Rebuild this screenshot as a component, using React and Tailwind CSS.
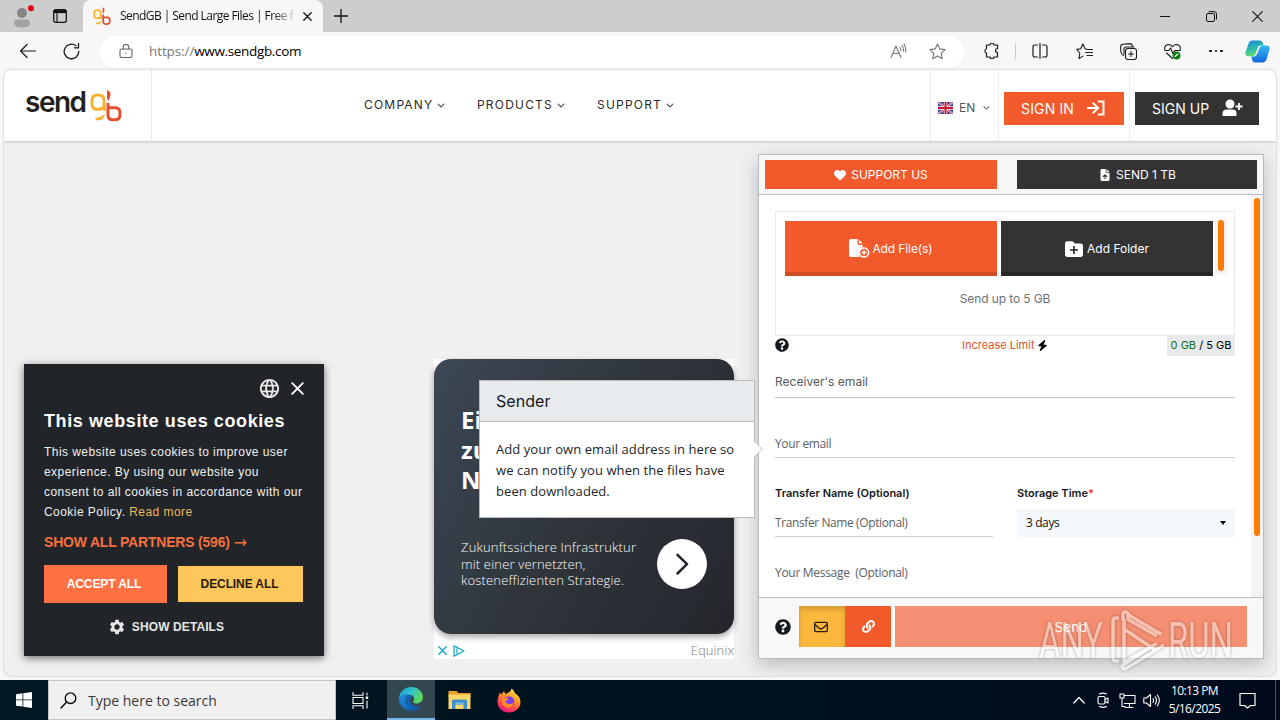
import {
  FaBolt,
  FaChevronDown,
  FaFileArrowUp,
  FaFolder,
  FaHeart,
  FaRegEnvelope,
} from 'react-icons/fa6';
import { FaLink, FaQuestionCircle } from 'react-icons/fa';
import { MdLanguage, MdSettings } from 'react-icons/md';

const segoe = "font-['Open_Sans','Noto_Sans',sans-serif]";
const inter = "font-['Inter','Liberation_Sans',sans-serif]";
const arial = "font-['Liberation_Sans',Arial,sans-serif]";

// ---------- shared drawings ----------

function Line({ children, size = 16, w = 1, className = '', box = 16 }) {
  return (
    <svg
      width={size}
      height={size}
      viewBox={`0 0 ${box} ${box}`}
      fill="none"
      stroke="currentColor"
      strokeWidth={w}
      strokeLinecap="round"
      strokeLinejoin="round"
      className={`shrink-0 ${className}`}
    >
      {children}
    </svg>
  );
}

function GbMark({ width, height }) {
  return (
    <svg width={width} height={height} viewBox="0 0 32 32" fill="none" className="shrink-0">
      <path d="M16 20.200Q13.500 20 12.600 18.600Q10.500 20 7.500 20Q2 20 2 14.500V11Q2 5.500 7.500 5.500h1Q14 5.500 14 11v5q0 2 1.200 2.800" stroke="#fbb034" strokeWidth="3" />
      <path d="M5 28.200Q10 28.300 14.700 24.500Q14.500 30.800 7.500 31Q5 30.500 5 28.200Z" fill="#fbb034" />
      <path d="M17 .5Q21 1.800 20.600 5.500L18.600 11.500L17 9Z" fill="#e2502f" />
      <path d="M18 13.500v12q0 4.800 4.800 4.800h2.300q4.800 0 4.800-4.800v-2.500q0-4.700-4.800-4.700H18" stroke="#e2502f" strokeWidth="3" />
    </svg>
  );
}

function EdgeIcon() {
  return (
    <svg width="26" height="26" viewBox="0 0 26 26">
      <defs>
        <linearGradient id="edgeTop" x1="0" y1="0" x2="1" y2="0.4">
          <stop offset="0" stopColor="#2197d8" />
          <stop offset="0.5" stopColor="#2fc3d4" />
          <stop offset="1" stopColor="#5ad75a" />
        </linearGradient>
        <linearGradient id="edgeLow" x1="0" y1="0" x2="1" y2="1">
          <stop offset="0" stopColor="#1f8fe0" />
          <stop offset="1" stopColor="#0c4f9e" />
        </linearGradient>
      </defs>
      <path d="M1 12C2 5 7 1 13 1c7 0 12 5 12 10 0 4-3 6.500-6.500 6.500-3 0-4-1.500-3-2.800 1.500-2 .5-6-4.500-6C6 8.700 2 11 1 12Z" fill="url(#edgeTop)" />
      <path d="M1 12c2-3 6-4.300 10-3.300C8 10 7 13 8 16.500 9.500 21 14 23.500 22.500 20 20 24 16.500 25.300 12.500 25 6 24.500 .6 19 1 12Z" fill="url(#edgeLow)" />
      <path d="M11 8.700c-2.500 1.800-3.500 5-2.500 8.300 1.500 4.500 7 6.500 14 3-3.500 1-9 .2-10.300-4-.6-2-.1-4 1.500-5.500C13 9.300 12 8.800 11 8.700Z" fill="#1164b8" />
    </svg>
  );
}

function ExplorerIcon() {
  return (
    <svg width="23" height="20" viewBox="0 0 23 20">
      <path d="M.5 1h8l2 2h12v4H.5Z" fill="#eaa12a" />
      <path d="M.5 4.500h22V19H.5Z" fill="#fdd766" />
      <path d="M4 19v-8q0-1.500 1.500-1.500h12Q19 9.500 19 11v8h-3.500v-4.500h-8V19Z" fill="#3f8fce" />
      <path d="M7.500 12.500h8v2h-8Z" fill="#7fbde8" />
    </svg>
  );
}

function FirefoxIcon() {
  return (
    <svg width="24" height="25" viewBox="0 0 24 25">
      <defs>
        <linearGradient id="fox" x1="0.8" y1="0" x2="0.3" y2="1">
          <stop offset="0" stopColor="#fff04a" />
          <stop offset="0.4" stopColor="#ff9a26" />
          <stop offset="0.75" stopColor="#ff4056" />
          <stop offset="1" stopColor="#e31587" />
        </linearGradient>
      </defs>
      <path d="M14.500.5c2 1.500 3 3 3.400 4.700C21 7 23.500 10 23.500 14c0 6-5 10.500-11.500 10.500S.5 20 .5 13.500C.5 10 2 7 3 4.500l1.500 2L7 3l1.500 3.200C11 5 14 4 14.500.5Z" fill="url(#fox)" />
      <circle cx="12" cy="13.500" r="5.300" fill="#7a3ff0" />
      <path d="M5 11c2-2 5-1.500 7-.2-1 1.500-2.500 1.400-3.500 2.400 1 3.300 5.500 3.800 8 1.300C16 19 12 20.500 9 19.500 5.500 18.300 4 14.500 5 11Z" fill="#ff8a2a" />
    </svg>
  );
}

function CopilotIcon() {
  return (
    <svg width="25" height="23" viewBox="0 0 25 23">
      <defs>
        <linearGradient id="copA" x1="0" y1="0" x2="0.3" y2="1">
          <stop offset="0" stopColor="#1b7fe0" />
          <stop offset="0.6" stopColor="#2bc0a8" />
          <stop offset="1" stopColor="#6fdc6a" />
        </linearGradient>
        <linearGradient id="copB" x1="0.5" y1="0" x2="0.5" y2="1">
          <stop offset="0" stopColor="#35b8f2" />
          <stop offset="1" stopColor="#1668dd" />
        </linearGradient>
      </defs>
      <path d="M7.500.5h7.500q2 0 2.800 2.500l.7 2.500h-3q-2 0-2.700 2L10.500 14q-.8 2.300-3 2.300H3.300Q-.5 16.300.7 12L3.500 3.500Q4.500.5 7.500.5Z" fill="url(#copA)" />
      <path d="M17.500 22.500H10q-2 0-2.800-2.500l-.9-3.500h2.700q2 0 2.800-2L14.500 8q.8-2.500 3-2.500h4.200q3.800 0 2.600 4.500l-2.800 9.500q-1 3-4 3Z" fill="url(#copB)" />
    </svg>
  );
}

function UkFlag() {
  return (
    <svg width="15" height="12" viewBox="0 0 15 12" className="shrink-0">
      <rect width="15" height="12" rx="1" fill="#37408f" />
      <path d="M0 0l15 12M15 0L0 12" stroke="#e9e4ee" strokeWidth="2" />
      <path d="M0 0l15 12M15 0L0 12" stroke="#cf2740" strokeWidth="0.900" />
      <path d="M7.500 0v12M0 6h15" stroke="#f3eef2" strokeWidth="3.400" />
      <path d="M7.500 0v12M0 6h15" stroke="#cf1430" strokeWidth="2" />
    </svg>
  );
}

// ---------- browser chrome ----------

function TabStrip() {
  return (
    <div className="flex h-8 shrink-0 bg-[#cdcdcd] text-[#111]">
      <div className="flex w-[83px] items-center rounded-br-md pl-[13px]">
        <svg width="22" height="24" viewBox="0 0 22 24" className="shrink-0">
          <circle cx="9" cy="9" r="5" fill="#858585" />
          <path d="M1 19q0-3.500 3.500-3.500h9q3.500 0 3.500 3.500 0 4.500-8 4.500t-8-4.500Z" fill="#a5a1a0" />
          <circle cx="18" cy="4.200" r="3" fill="#e3000f" />
        </svg>
        <svg width="14" height="14" viewBox="0 0 14 14" className="ml-[18px] shrink-0" fill="none" stroke="#111">
          <rect x="0.700" y="0.700" width="12.600" height="12.600" rx="2" strokeWidth="1.300" />
          <path d="M1 2.600h12" strokeWidth="3" />
          <path d="M4 3v10" strokeWidth="1.100" />
        </svg>
      </div>
      <div className="flex w-[240px] items-center rounded-t-lg bg-[#f7f7f7] pl-[10px]">
        <GbMark width={18} height={18} />
        <span className={`ml-[9px] w-[174px] overflow-hidden bg-gradient-to-r from-[#111] from-88% to-[#11111120] bg-clip-text text-[12px] leading-5 tracking-[-0.56px] whitespace-nowrap text-transparent ${segoe}`}>
          SendGB | Send Large Files | Free f
        </span>
        <Line size={9} box={9} w={1.3} className="ml-[9px]">
          <path d="M.8.8l7.400 7.400M8.200.8L.8 8.200" />
        </Line>
      </div>
      <div className="flex flex-1 items-center rounded-bl-md pl-[11px]">
        <Line size={14} box={14} w={1.3}>
          <path d="M7 .5v13M.5 7h13" />
        </Line>
      </div>
      <div className="flex items-center pr-[17px]">
        <Line size={10} box={10} w={1}>
          <path d="M0 5.500h10" />
        </Line>
        <Line size={11} box={11} w={1} className="ml-[36px]">
          <rect x=".5" y="2.500" width="8" height="8" rx="1.500" />
          <path d="M3 .6h5q2.500 0 2.500 2.500v5" />
        </Line>
        <Line size={11} box={11} w={1.1} className="ml-[35px]">
          <path d="M.7.7l9.600 9.600M10.300.7L.7 10.300" />
        </Line>
      </div>
    </div>
  );
}

function Toolbar() {
  return (
    <div className="flex h-[38px] shrink-0 items-center bg-[#f7f7f7] text-[#1b1b1b]">
      <Line size={16} className="ml-5" w={1.2}>
        <path d="M.6 8h15M7 1.500L.6 8 7 14.500" />
      </Line>
      <Line size={17} box={17} className="ml-[27px]" w={1.3}>
        <path d="M15.800 8.500A7.300 7.300 0 1 1 13 2.700M15.500.6v4.200h-4.200" />
      </Line>
      <div className="ml-[20px] flex h-[31px] w-[864px] items-center rounded-full bg-white pl-[19px]">
        <Line size={14} box={14} className="text-[#666]" w={1.1}>
          <rect x="1" y="5" width="12" height="8.500" rx="1.500" />
          <path d="M4.200 5V3.200a2.800 2.800 0 0 1 5.600 0V5M7 9v.4" />
        </Line>
        <span className={`ml-[16px] text-[13.5px] leading-5 tracking-[-0.35px] whitespace-nowrap ${segoe}`}>
          <span className="tracking-[-0.1px] text-[#777]">https://</span>
          <span className="text-black">www.sendgb.com</span>
        </span>
        <div className="ml-auto flex items-center gap-[22px] pr-[18px] text-[#777]">
          <Line size={17} box={17} w={1.1}>
            <path d="M1 14.500L6 3l5 11.500M2.800 10.500h6.500M10 4.500q1 1.300.6 3M12 2.500q2 2.500 1.200 6M14 .9q2.500 4 1.500 8" />
          </Line>
          <Line size={17} box={17} w={1.1}>
            <path d="M8.500 1l2.300 4.900 5.300.7-3.900 3.700 1 5.400-4.700-2.600-4.700 2.600 1-5.400L.9 6.600l5.300-.7Z" />
          </Line>
        </div>
      </div>
      <Line size={16} className="ml-[20px]" w={1.2}>
        <path d="M2.500 2h3.300a2.200 2.200 0 0 1 4.300 0h3.400v3.500a2 2 0 0 0 0 4v4.500h-3.400a2.200 2.200 0 0 1-4.300 0H2.500v-4a2.200 2.200 0 0 1 0-4.200Z" />
      </Line>
      <div className="ml-[15px] h-4 w-px bg-[#ccc]" />
      <Line size={16} className="ml-4" w={1.2}>
        <path d="M5.500 2H3Q1 2 1 4v8q0 2 2 2h2.500M8 .5v15M10.500 2H13q2 0 2 2v8q0 2-2 2h-2.500" />
      </Line>
      <Line size={17} box={17} className="ml-[28px]" w={1.1}>
        <path d="M10.500 6L9 5.700 6.800 1 4.700 5.700.8 6.400l3 3.600-.8 5.500 4-2.400M11 6.500h5.500M9.500 9.500h7M11 12.500h5.500" />
      </Line>
      <Line size={17} box={17} className="ml-[27px]" w={1.1}>
        <rect x="5.500" y="5.500" width="11" height="11" rx="2.500" />
        <path d="M11 8.500v5M8.500 11h5M3.500 12.500Q1 11 .8 8.500L.6 4Q.6 1.500 3 1.200L9.500.6Q12 .6 12.500 3M4 11V6q0-2 2-2h8" />
      </Line>
      <Line size={17} box={17} className="ml-[27px]" w={1.1}>
        <path d="M.8 7Q0 2 4.300 1.500 7 1.500 8.500 3.700 10 1.500 12.700 1.500 17 2 16.200 7M.8 7.500h4L6.500 5l2.500 5.500 1.700-3h5.500M2.500 10l6 5.500" />
        <circle cx="12.500" cy="12.500" r="4" fill="#107c10" stroke="none" />
        <path d="M11 13.500l3-2.500" stroke="#fff" />
      </Line>
      <span className="ml-[28px] flex gap-[3px]">
        <i className="size-[2.5px] rounded-full bg-black" />
        <i className="size-[2.5px] rounded-full bg-black" />
        <i className="size-[2.5px] rounded-full bg-black" />
      </span>
      <span className="ml-[22px]">
        <CopilotIcon />
      </span>
    </div>
  );
}

// ---------- site header ----------

const menu = [
  { label: 'COMPANY', w: 'w-[113px]' },
  { label: 'PRODUCTS', w: 'w-[120px]' },
  { label: 'SUPPORT', w: 'w-[100px]' },
];

function SiteHeader() {
  return (
    <header className={`relative flex h-[71px] shrink-0 bg-white shadow-[0_1px_3px_rgba(0,0,0,0.18)] ${inter}`}>
      <div className="flex w-[148px] border-r border-[#e8e8e8] pt-[19px] pl-[21px]">
        <span className="mt-[-3px] w-[65px] font-['Inter',sans-serif] text-[28px] leading-[32px] font-semibold tracking-[-1.5px] text-[#231f20]">
          send
        </span>
        <GbMark width={32} height={33} />
      </div>
      <nav className="flex flex-1 pt-[25px] pl-[212px]">
        {menu.map((m) => (
          <span key={m.label} className={`flex h-5 items-center text-[12px] tracking-[1.2px] text-[#2b2b2b] ${m.w}`}>
            {m.label}
            <FaChevronDown size={8} className="ml-[4px]" />
          </span>
        ))}
      </nav>
      <div className="flex w-[69px] items-center border-x border-[#ececec] pt-[4px] pl-[7px] text-[12px] text-[#555]">
        <UkFlag />
        <span className="ml-[6px]">EN</span>
        <FaChevronDown size={7} className="ml-[8px]" />
      </div>
      <div className="flex w-[131px] items-center border-r border-[#ececec] pt-[6px] pl-[5px]">
        <button type="button" className="flex h-[33px] w-[120px] items-center bg-[#f25a2c] pl-[17px] text-[14px] tracking-[0.15px] text-white">
          SIGN IN
          <Line size={18} box={18} w={2} className="mt-[-2px] ml-[13px]">
            <path d="M1 9h9.500M6.500 4.500L11 9l-4.500 4.500M12 2.500h4.500v13H12" strokeLinecap="square" strokeLinejoin="miter" />
          </Line>
        </button>
      </div>
      <div className="flex w-[146px] items-center pt-[6px] pl-[5px]">
        <button type="button" className="flex h-[33px] w-[124px] items-center bg-[#333] pl-[17px] text-[14px] tracking-[0.02px] text-white">
          SIGN UP
          <svg width="21" height="18" viewBox="0 0 21 18" fill="#fff" className="mt-[-2px] ml-[13px] shrink-0">
            <circle cx="8" cy="5" r="4.500" />
            <path d="M.5 17v-2.500Q.5 10.500 5 10.500h5.500q4 0 4 4V17Z" />
            <path d="M17 4v7M13.500 7.500h7" stroke="#fff" strokeWidth="1.800" />
          </svg>
        </button>
      </div>
    </header>
  );
}

// ---------- page content ----------

function CookieDialog() {
  return (
    <div className={`mb-[20px] ml-5 h-[292px] w-[300px] shrink-0 self-end bg-[#212428] px-5 text-white shadow-[0_2px_8px_rgba(0,0,0,0.55)] ${arial}`}>
      <div className="flex h-[45px] items-center justify-end pt-[4px]">
        <MdLanguage size={23} className="text-[#e6e6e6]" />
        <Line size={13} box={13} w={1.9} className="ml-[10px]">
          <path d="M1.200 1.200l10.600 10.600M11.800 1.200L1.200 11.800" />
        </Line>
      </div>
      <h2 className="h-[33px] text-[18px] leading-6 font-bold tracking-[0.6px] whitespace-nowrap">This website uses cookies</h2>
      <p className="text-[12px] leading-5 tracking-[0.45px] whitespace-nowrap text-[#f0f0f0]">
        This website uses cookies to improve user
        <br />
        experience. By using our website you
        <br />
        consent to all cookies in accordance with our
        <br />
        Cookie Policy. <span className="text-[#e9b95a]">Read more</span>
      </p>
      <div className="mt-[10px] flex items-center text-[14px] leading-[21px] font-bold tracking-[-0.2px] whitespace-nowrap text-[#f5703f]">
        SHOW ALL PARTNERS (596)
        <span className="ml-[4px] font-['DejaVu_Sans',sans-serif] text-[16px] font-normal">→</span>
      </div>
      <div className="mt-[12px] flex h-[38px] items-center gap-[11px] text-[12px] font-bold">
        <button type="button" className="h-[38px] w-[123px] bg-[#ff7043] pr-[3px] tracking-[-0.1px]">ACCEPT ALL</button>
        <button type="button" className="h-[36px] w-[125px] bg-[#fdc75c] pr-[2px] tracking-[-0.1px] text-[#2a1c08]">DECLINE ALL</button>
      </div>
      <div className="mt-[14px] flex h-5 items-center justify-center pr-[16px] text-[12px] font-bold tracking-[0.1px] text-[#e6e6e6]">
        <MdSettings size={18} className="mr-[6px]" />
        SHOW DETAILS
      </div>
    </div>
  );
}

function AdCard() {
  return (
    <div className={`mb-[17px] ml-[110px] flex h-[300px] w-[300px] shrink-0 flex-col self-end bg-white ${segoe}`}>
      <div className="h-[275px] shrink-0 rounded-[17px] bg-[linear-gradient(120deg,#3c4855_0%,#2f353b_50%,#24262c_100%)] pt-[46px] pl-[27px] text-white shadow-[0_3px_6px_rgba(0,0,0,0.35)]">
        <h3 className="h-[134px] w-[120px] text-[24px] leading-[30px] font-bold">
          Ei
          <br />
          zu
          <br />
          N
        </h3>
        <div className="flex">
          <p className="w-[196px] text-[13px] leading-[16.5px] font-light tracking-[0.18px] whitespace-nowrap">
            Zukunftssichere Infrastruktur
            <br />
            mit einer vernetzten,
            <br />
            kosteneffizienten Strategie.
          </p>
          <span className="flex size-[50px] items-center justify-center rounded-full bg-white text-[#22262b]">
            <Line size={22} box={22} w={2.5}>
              <path d="M6.500 1.800L16 11.200 6.500 20.500" />
            </Line>
          </span>
        </div>
      </div>
      <div className="flex h-[25px] items-center pt-[8px] pl-[4px]">
        <Line size={9} box={9} w={1.4} className="text-[#17a9c4]">
          <path d="M.8.8l7.400 7.400M8.200.8L.8 8.200" />
        </Line>
        <Line size={12} box={12} w={1.3} className="ml-[6px] text-[#17a9c4]">
          <path d="M1 .8L11 6 1 11.200Z" />
          <path d="M4 4v4" />
        </Line>
        <span className="mt-[-2px] ml-auto text-[13px] leading-4 font-light tracking-[0.1px] text-[#777]">Equinix</span>
      </div>
    </div>
  );
}

function TransferPanel() {
  return (
    <section className={`mt-[13px] ml-[24px] flex h-[505px] w-[506px] shrink-0 flex-col border border-[#b9bbbc] bg-white shadow-[0_6px_18px_rgba(0,0,0,0.22)] ${inter}`}>
      <div className="flex h-[40px] shrink-0 border-b border-[#b9bbbc] bg-[#f7f7f7] pt-[5px] pl-[6px] text-[12px] text-white">
        <div className="flex h-[29px] w-[232px] items-center justify-center gap-[5px] bg-[#f25a2c]">
          <FaHeart size={12} />
          SUPPORT US
        </div>
        <div className="ml-[20px] flex h-[29px] w-[240px] items-center justify-center gap-[5px] bg-[#333] pl-px">
          <FaFileArrowUp size={12} />
          SEND 1 TB
        </div>
      </div>

      <div className="flex h-[402px] shrink-0">
        <div className="w-[492px] pt-[16px] pl-[16px]">
          <div className="h-[125px] w-[460px] border border-[#e9eaeb] pt-[9px] pl-[9px]">
            <div className="flex text-[12px] text-white">
              <div className="flex h-[55px] w-[212px] items-center justify-center border-b-[4px] border-[#cf4c24] bg-[#f25a2c] pt-[4px]">
                <svg width="21" height="19" viewBox="0 0 21 19" className="mr-[2px] shrink-0">
                  <path d="M2 0h6.500v4.500q0 1.500 1.500 1.500h3.500v4q-3.500 1.500-3.500 5 0 2 1 3H2q-2 0-2-2V2q0-2 2-2ZM9.800.3l3.700 4.200H9.800Z" fill="#fff" />
                  <circle cx="15" cy="13.500" r="4.600" fill="none" stroke="#fff" strokeWidth="1.500" />
                  <path d="M15 11v5M12.500 13.500h5" stroke="#fff" strokeWidth="1.300" />
                </svg>
                <span className="tracking-[-0.1px]">Add File(s)</span>
              </div>
              <div className="ml-[4px] flex h-[55px] w-[212px] items-center justify-center border-b-[4px] border-[#282828] bg-[#333] pt-[4px]">
                <span className="relative mr-[4px] flex size-[18px] items-center">
                  <FaFolder size={18} />
                  <svg width="8" height="8" viewBox="0 0 8 8" className="absolute top-[6px] left-[5px]">
                    <path d="M4 0v8M0 4h8" stroke="#222" strokeWidth="1.600" />
                  </svg>
                </span>
                Add Folder
              </div>
              <div className="mt-[-2px] ml-[2px] flex h-[56px] w-[12px] bg-[#f4f4f4] pt-px pl-[3px]">
                <div className="h-[51px] w-[6px] rounded-full bg-[#fb7c00]" />
              </div>
            </div>
            <div className="mt-[13px] w-[440px] text-center text-[12px] leading-5 tracking-[-0.1px] text-[#6d7176]">Send up to 5 GB</div>
          </div>

          <div className="flex h-[20px] w-[460px] items-center text-[11px]">
            <FaQuestionCircle size={14} className="mt-[-2px] text-[#16191c]" />
            <span className="mt-[-2px] ml-[173px] flex items-center gap-[2px] text-[#d8532c]">
              Increase Limit
              <FaBolt size={11} className="text-black" />
            </span>
            <span className="ml-auto flex h-5 w-[68px] items-center justify-center bg-[#e7e9eb] pb-[2px] text-black">
              <span className="text-[#107010]">0 GB</span>&nbsp;/ 5 GB
            </span>
          </div>

          <div className="flex h-[42px] w-[460px] items-end border-b border-[#c2c2c2] pb-[5px] text-[12px] leading-5 tracking-[0.02px] text-[#55585c]">
            Receiver's email
          </div>
          <div className={`flex h-[60px] w-[460px] items-end border-b border-[#cfcfcf] pb-[3px] text-[12px] leading-5 tracking-[-0.38px] text-[#5c6064] ${segoe}`}>
            Your email
          </div>

          <div className="mt-[25px] flex text-[11px] leading-5 font-semibold text-[#16191c]">
            <span className="w-[242px]">Transfer Name (Optional)</span>
            <span>
              Storage Time<span className="text-[#dc3545]">*</span>
            </span>
          </div>
          <div className={`mt-[6px] flex text-[12px] leading-5 tracking-[-0.4px] ${segoe}`}>
            <div className="h-[28px] w-[218px] border-b border-[#cfcfcf] pt-[4px] text-[#5c6064]">Transfer Name (Optional)</div>
            <div className="ml-[24px] flex h-[28px] w-[218px] items-center bg-[#f5f8fa] pr-[9px] pl-[9px] text-[#111]">
              3 days
              <span className="ml-auto border-x-[3.5px] border-t-[4px] border-x-transparent border-t-black" />
            </div>
          </div>
          <div className={`mt-[26px] text-[12px] leading-5 tracking-[-0.3px] whitespace-pre text-[#5c6064] ${segoe}`}>{'Your Message  (Optional)'}</div>
        </div>
        <div className="flex w-[12px] justify-center bg-[#f3f3f3] pt-[3px]">
          <div className="h-[338px] w-[6px] rounded-full bg-[#fb7c00]" />
        </div>
      </div>

      <div className="flex flex-1 border-t border-[#b9bbbc] bg-[#f8f8f8] pt-[8px] pl-[16px]">
        <FaQuestionCircle size={16} className="mt-[13px] text-[#16191c]" />
        <div className="ml-[8px] flex h-[41px] w-[46px] items-center justify-center bg-[#fbb83d] pr-[2px] text-[#2b1c05] shadow-[inset_0_3px_5px_rgba(0,0,0,0.18)]">
          <FaRegEnvelope size={14} />
        </div>
        <div className="flex h-[41px] w-[46px] items-center justify-center bg-[#f25a2c] text-white">
          <FaLink size={13} />
        </div>
        <div className="ml-[4px] flex h-[41px] w-[352px] items-center justify-center bg-[#f58f72] pt-[2px] text-[13.5px] text-white">Send</div>
      </div>
    </section>
  );
}

function SenderPopover() {
  return (
    <div className={`absolute top-[310px] left-[475px] h-[138px] w-[276px] border border-[#b9bbbc] bg-white ${inter}`}>
      <div className="h-[41px] border-b border-[#b9bbbc] bg-[#e8ebee] pl-[16px] text-[16px] leading-[40px] tracking-[0.05px] text-[#16191c]">
        Sender
      </div>
      <p className={`pt-[17px] pl-[16px] text-[13px] leading-[21px] tracking-[0.07px] whitespace-nowrap text-[#212529] ${segoe}`}>
        Add your own email address in here so
        <br />
        we can notify you when the files have
        <br />
        been downloaded.
      </p>
      <svg width="10" height="18" viewBox="0 0 10 18" className="absolute top-[59px] left-[273px]">
        <path d="M0 0L8.500 9 0 18Z" fill="#fff" />
        <path d="M1 .5L9 9 1 17.500" fill="none" stroke="#c4c6c8" />
      </svg>
    </div>
  );
}

function Watermark() {
  return (
    <svg width="210" height="70" viewBox="0 0 210 70" className="pointer-events-none absolute top-[605px] left-[1030px] overflow-visible opacity-45 drop-shadow-[0_0_1.5px_rgba(0,0,0,0.7)]">
      <g fill="#fff" fontFamily="Roboto, 'Liberation Sans', sans-serif" fontSize="50" fontWeight="400">
        <text x="9" y="53" textLength="64" lengthAdjust="spacingAndGlyphs">ANY</text>
        <text x="138" y="53" textLength="65" lengthAdjust="spacingAndGlyphs">RUN</text>
      </g>
      <g fill="none" stroke="#fff" strokeWidth="3.500" strokeLinejoin="round">
        <path d="M89 13h-3.500q-2.500 0-2.500 3v37q0 3 3 3h3" />
        <path d="M127 38.500L94 57V13.500M94 24l32 21.500M127 31L98 14.200V8.500Q94 5 93 9v6" />
        <path d="M97 9l34.500 20.500M134 40L96 63.500Q92 65 92 61l28-18.500" />
      </g>
    </svg>
  );
}

// ---------- taskbar ----------

function Taskbar() {
  return (
    <div className={`mt-auto flex h-10 shrink-0 items-center bg-[linear-gradient(90deg,#001821_0%,#00141f_40%,#000f20_75%,#000a1c_100%)] text-white ${segoe}`}>
      <div className="flex w-12 justify-center">
        <svg width="16" height="16" viewBox="0 0 16 16" fill="#fff">
          <path d="M0 2.200L6.500 1.300v6.200H0ZM7.300 1.200L16 0v7.500H7.300ZM0 8.300h6.500v6.300L0 13.800ZM7.300 8.300H16V16l-8.700-1.200Z" />
        </svg>
      </div>
      <div className="flex h-10 w-[288px] items-center border border-[#c3c3c3] bg-[#f0f0f0] pl-[11px] text-[#3a3a3a]">
        <Line size={17} box={17} w={1.3} className="text-black">
          <circle cx="10.500" cy="6.200" r="5.300" />
          <path d="M6.700 10L1 16" />
        </Line>
        <span className="mt-px ml-[11px] text-[14px] leading-5">Type here to search</span>
      </div>
      <div className="flex w-[51px] justify-center pr-[2px]">
        <Line size={17} box={17} w={1.1}>
          <path d="M1 .6v2.600h10V.6M1 16.400v-2.600h10v2.600M1 5.500h10v6H1ZM15 1v2M15 9v7" />
          <path d="M13.800 4.500h2.400v2.500h-2.400Z" fill="#fff" stroke="none" />
        </Line>
      </div>
      <div className="flex h-10 w-12 items-center justify-center border-b-2 border-[#76b9ed] bg-[#334750]">
        <EdgeIcon />
      </div>
      <div className="flex w-[49px] justify-center">
        <ExplorerIcon />
      </div>
      <div className="flex w-[49px] justify-center">
        <FirefoxIcon />
      </div>
      <div className="ml-auto flex items-center">
        <Line size={12} box={12} w={1.2}>
          <path d="M.8 9L6 3.500 11.200 9" />
        </Line>
        <Line size={16} box={16} w={1.1} className="ml-[10px]">
          <rect x="3" y="4.500" width="7" height="7.500" rx="1.500" />
          <path d="M10 7.500l3-1.500v5L10 9.500M4.500 2Q8 .2 11.500 2M4.500 14.500Q8 16.200 11.500 14.500" />
        </Line>
        <Line size={17} box={17} w={1.1} className="ml-[8px]">
          <path d="M5 3.500h11v8H5.500M10.500 11.500v3.500M6 15.500h8M1 2h4v4H1ZM3 6v8.500h3" />
        </Line>
        <Line size={17} box={17} w={1.1} className="ml-[7px]">
          <path d="M.8 6v5h2.700l4 3.500v-12L3.500 6ZM10 6.500q1.200 2 0 4M12.200 4.800q2.500 3.700 0 7.400M14.300 3q4 5.500 0 11" />
        </Line>
        <div className="ml-[8px] flex w-[53px] flex-col items-center text-[12px] leading-[18px] tracking-[-0.6px] whitespace-nowrap">
          <span>10:13 PM</span>
          <span>5/16/2025</span>
        </div>
        <Line size={17} box={17} w={1.2} className="ml-[18px]">
          <path d="M1 1.500h15v12h-4.500L8.500 16l-3-2.500H1Z" />
        </Line>
        <div className="ml-[19px] h-10 w-px bg-[#4b5663]" />
        <div className="w-[4px]" />
      </div>
    </div>
  );
}

export default function App() {
  return (
    <div className="relative flex h-[720px] w-[1280px] flex-col overflow-hidden bg-[#f7f7f7]">
      <TabStrip />
      <Toolbar />
      <main className="relative mx-1 flex h-[606px] shrink-0 flex-col overflow-hidden rounded-lg bg-[#f0f0f0] shadow-[0_0_2px_rgba(0,0,0,0.35)]">
        <SiteHeader />
        <div className="flex flex-1 items-start">
          <CookieDialog />
          <AdCard />
          <TransferPanel />
        </div>
        <SenderPopover />
      </main>
      <Watermark />
      <Taskbar />
    </div>
  );
}
